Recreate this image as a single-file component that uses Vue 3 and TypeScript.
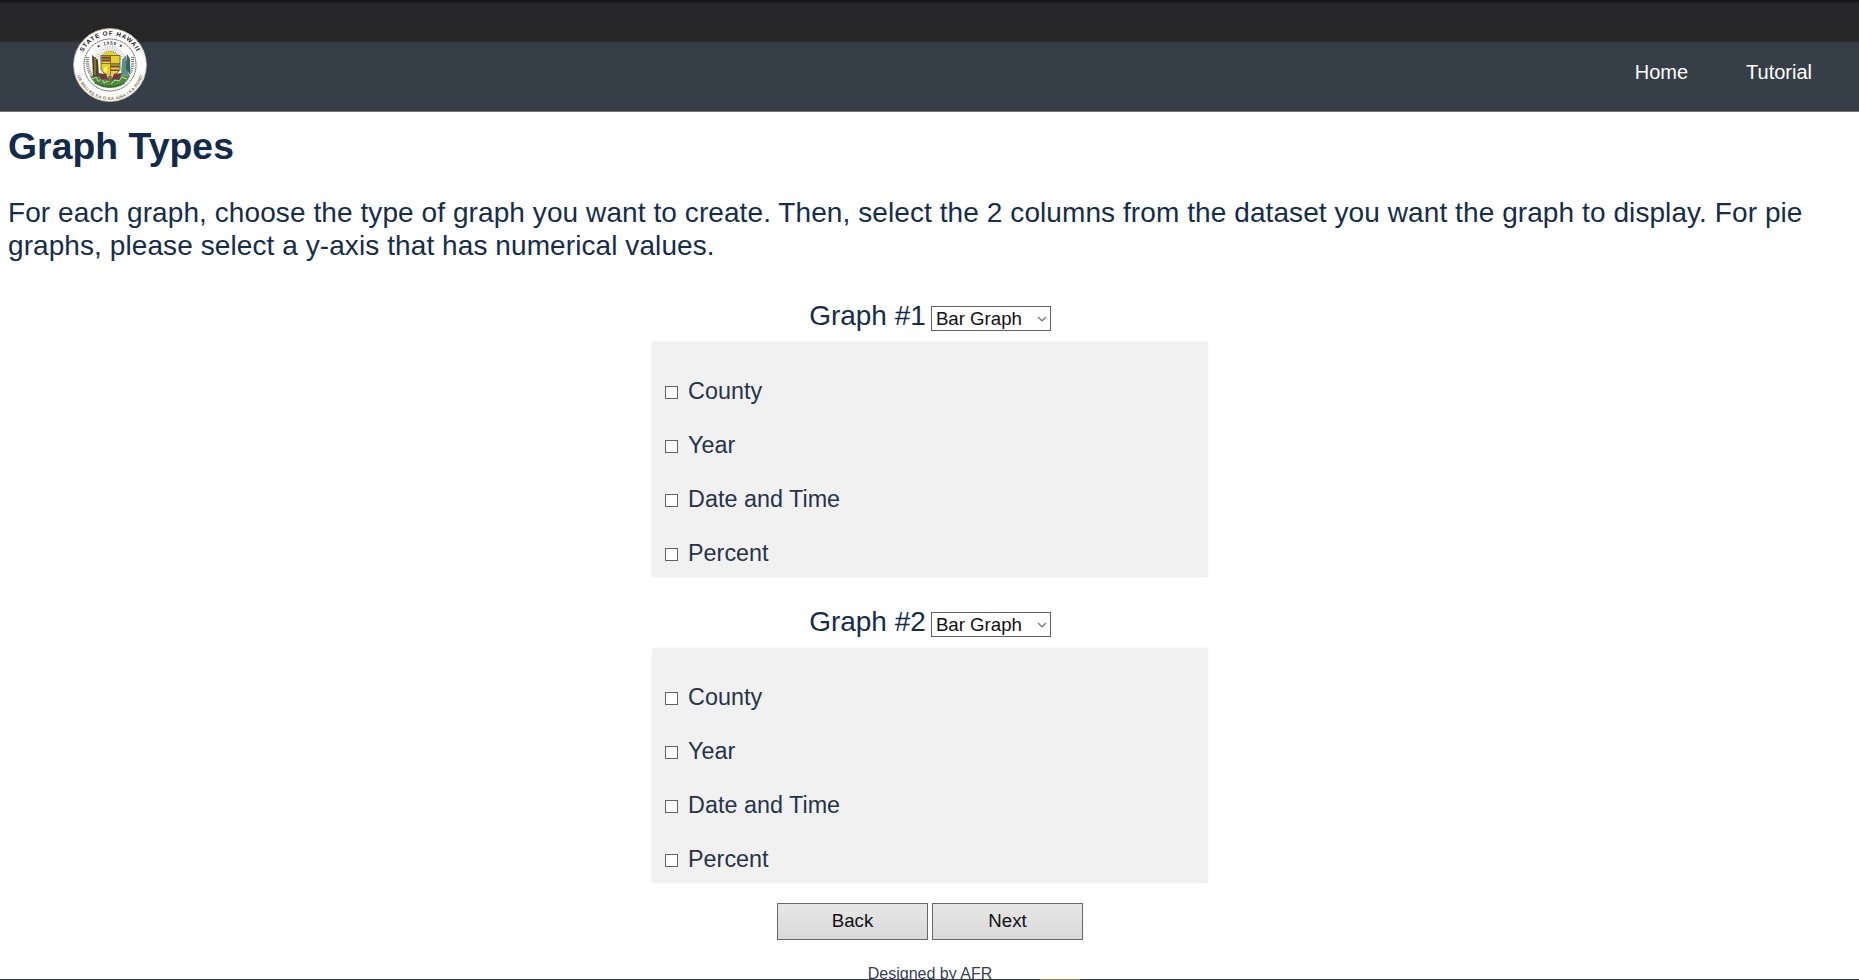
<script setup lang="ts">
import { ref } from 'vue'

interface Graph {
  id: number
  type: string
  selected: string[]
}

const links: string[] = ['Home', 'Tutorial']
const columns: string[] = ['County', 'Year', 'Date and Time', 'Percent']
const types: string[] = ['Bar Graph', 'Line Graph', 'Pie Graph']
const graphs = ref<Graph[]>([
  { id: 1, type: 'Bar Graph', selected: [] },
  { id: 2, type: 'Bar Graph', selected: [] },
])
const rays: number[] = Array.from({ length: 17 }, (_, i) => -80 + i * 10)
</script>

<template>
  <div class="page">
    <div class="topbar"></div>
    <header class="header">
      <svg class="seal" viewBox="0 0 74 74" aria-label="State of Hawaii">
        <defs>
          <path id="arcTop" d="M7.2 37a29.8 29.8 0 0 1 59.6 0" />
          <path id="arcYear" d="M16.5 37a20.5 20.5 0 0 1 41 0" />
          <path id="arcBottom" d="M2.9 38a34.1 34.1 0 0 0 68.2 0" />
        </defs>
        <circle cx="37" cy="37" r="36.4" fill="#fdfdfb" stroke="#c9c3ae" stroke-width=".8" />
        <circle cx="37" cy="37" r="26" fill="none" stroke="#3c3d38" stroke-width="1" stroke-dasharray="1.3 .7" />
        <text class="ring"><textPath href="#arcTop" startOffset="50%" text-anchor="middle">STATE OF HAWAII</textPath></text>
        <text class="year"><textPath href="#arcYear" startOffset="50%" text-anchor="middle">★ 1959 ★</textPath></text>
        <text class="motto"><textPath href="#arcBottom" startOffset="50%" text-anchor="middle">UA MAU KE EA O KA AINA I KA PONO</textPath></text>
        <g stroke="#8f908c" stroke-width=".45">
          <path v-for="r in rays" :key="r" d="M37 25V17.5" :transform="`rotate(${r} 37 33)`" />
        </g>
        <path d="M29.5 28.5a7.5 5 0 0 1 15 0z" fill="#f0d21d" stroke="#8c7a21" stroke-width=".4" />
        <path d="M17 48q6 12 20 12t20-12l-8-1-12 5-12-5z" fill="#4b8e3d" />
        <path d="M19 51l4-2 2 4 4-2 2 4 4-2 3 3 4-4 4 1 3-4 5 2" fill="none" stroke="#e5eadb" stroke-width=".8" />
        <path d="M22 55q15 7 30 0" fill="none" stroke="#28512b" stroke-width="1.5" stroke-dasharray="1.6 1" />
        <path d="M14.5 29q-1 12 4 18M59.5 29q1 12-4 18" fill="none" stroke="#747970" stroke-width="3.2" stroke-dasharray=".9 .9" />
        <path d="M19 27l6 5 1 16-6 1z" fill="#49452c" />
        <path d="M21 29h2v18h-2z" fill="#8b6e34" />
        <path d="M53 27l-4 5-1 15 8 1z" fill="#5a9188" />
        <path d="M54 26l3 5v15l-4-5z" fill="#33655f" />
        <path d="M28 27.5h19V42q-2 4-9.5 6Q30 46 28 42z" fill="#e6cf28" stroke="#44402c" stroke-width=".7" />
        <path d="M28.5 28.5h9v1.6h-9zM28.5 32h9v1.6h-9zM38 38h8.6v1.5H38zM38 41.5h8v1.5h-8z" fill="#84404a" />
        <path d="M28.5 30.2h9v1.2h-9zM38 36.4h8.6v1.2H38z" fill="#384c52" />
        <path d="M37.5 28v19M28 35.5h19" stroke="#59512d" stroke-width=".7" />
        <path d="M31 40l3-2v5l-3 1z" fill="#fff27b" />
        <path d="M25 45l8 1 4 3 4-3 8-1-3 7-5-1-4 3-4-3-5 1z" fill="#753640" />
        <path d="M33 45.5l4 2.5 4-2.5-2 5h-4z" fill="#d8d2bd" />
        <path d="M35 48h4l-1 8h-2z" fill="#6f7d35" />
      </svg>
      <nav class="nav">
        <a v-for="link in links" :key="link" href="#">{{ link }}</a>
      </nav>
    </header>

    <main class="main">
      <h1>Graph Types</h1>
      <p class="intro">
        For each graph, choose the type of graph you want to create. Then, select the 2 columns from the dataset you want the graph to display. For pie graphs, please select a y-axis that has numerical values.
      </p>

      <div class="graphs">
        <section v-for="graph in graphs" :key="graph.id">
          <div class="graph-head">
            <label :for="`type-${graph.id}`">Graph #{{ graph.id }}</label>
            <span class="picker">
              <select :id="`type-${graph.id}`" v-model="graph.type">
                <option v-for="t in types" :key="t">{{ t }}</option>
              </select>
              <svg viewBox="0 0 10 6"><path d="M1 1l4 3.8L9 1" fill="none" stroke="#777" stroke-width="1.2" /></svg>
            </span>
          </div>
          <div class="panel">
            <label v-for="column in columns" :key="column" class="option">
              <input v-model="graph.selected" type="checkbox" :value="column" />
              <span>{{ column }}</span>
            </label>
          </div>
        </section>
      </div>

      <div class="actions">
        <button type="button">Back</button>
        <button type="button">Next</button>
      </div>
      <footer>Designed by AFR</footer>
    </main>
    <div class="edge"><i></i></div>
  </div>
</template>

<style>
body {
  margin: 0;
  overflow: hidden;
}
</style>

<style scoped>
.page {
  position: relative;
  box-sizing: border-box;
  width: 100%;
  height: 980px;
  overflow: hidden;
  background: #fff;
  color: #152d4b;
  font-family: 'Liberation Sans', Arial, sans-serif;
}
.topbar {
  height: 42px;
  background: linear-gradient(#111116 0, #1d1d21 2px, #27272a 4px, #262626 38px, #2b2d30 42px);
}
.header {
  display: flex;
  justify-content: space-between;
  box-sizing: border-box;
  height: 70px;
  padding: 0 47px 0 73px;
  background: linear-gradient(#373c43 0, #363e48 8px, #363e48 60px, #393c43 69px, #75777b 69px);
}
.seal {
  position: relative;
  width: 74px;
  height: 74px;
  margin-top: -14px;
}
.ring {
  font: bold 6.2px 'Liberation Sans', sans-serif;
  letter-spacing: 0.9px;
  fill: #15171b;
}
.year {
  font: bold 4.6px 'Liberation Sans', 'DejaVu Sans', sans-serif;
  letter-spacing: 0.7px;
  fill: #33353b;
}
.motto {
  font: bold 4.4px 'Liberation Sans', sans-serif;
  letter-spacing: 0.25px;
  fill: #857658;
}
.nav {
  display: flex;
  gap: 58px;
  padding-top: 18px;
}
.nav a {
  color: #fff;
  font-size: 20px;
  line-height: 24px;
  text-decoration: none;
}
.main {
  padding: 0 8px;
}
h1 {
  margin: 0;
  padding-top: 13px;
  font-size: 37.33px;
  line-height: 42px;
  letter-spacing: 0.05px;
  color: #122b4c;
}
.intro {
  margin: 29px 0 36px;
  font-size: 28px;
  line-height: 33px;
  letter-spacing: 0.083px;
}
.graphs {
  display: grid;
  gap: 27px;
}
.graph-head {
  display: flex;
  justify-content: center;
  gap: 5px;
  height: 44px;
  padding-left: 1px;
  font-size: 28px;
  line-height: 36px;
}
.picker {
  position: relative;
  height: 25px;
  margin-top: 8px;
}
.picker svg {
  position: absolute;
  top: 10px;
  right: 4px;
  width: 10px;
  height: 6px;
}
select {
  display: block;
  appearance: none;
  box-sizing: border-box;
  width: 120px;
  height: 25px;
  padding: 0 0 0 4px;
  border: 1px solid #626262;
  border-radius: 0;
  background: #fff;
  color: #111;
  font: 18.67px/23px 'Liberation Sans', Arial, sans-serif;
}
.panel {
  box-sizing: border-box;
  width: 556px;
  height: 235px;
  margin: 0 auto;
  padding: 22px 13px 0;
  background: #f1f1f1;
  box-shadow: 0 0 3px #f1f1f1;
}
.option {
  display: flex;
  align-items: center;
  gap: 10.5px;
  height: 54px;
  color: #26334b;
  font-size: 23.33px;
  letter-spacing: 0.03px;
}
input {
  appearance: none;
  box-sizing: border-box;
  width: 13px;
  height: 13px;
  margin: 3px 0 0;
  border: 1px solid #626262;
  background: #fff;
}
.actions {
  display: flex;
  justify-content: center;
  gap: 4px;
  margin-top: 20px;
  padding-left: 1px;
}
button {
  width: 151px;
  height: 37px;
  padding: 0 0 2px;
  border: 1px solid #66676a;
  background: linear-gradient(#e8e7e8, #dad9da);
  color: #111;
  font: 18.67px 'Liberation Sans', Arial, sans-serif;
}
footer {
  margin-top: 24px;
  padding-left: 1px;
  color: #35405a;
  font-size: 16px;
  line-height: 20px;
  text-align: center;
}
.edge {
  position: absolute;
  right: 0;
  bottom: 0;
  left: 0;
  height: 1px;
  background: #35363a;
}
.edge i {
  display: block;
  width: 40px;
  height: 1px;
  margin-left: 1040px;
  background: #84863c;
}
</style>
